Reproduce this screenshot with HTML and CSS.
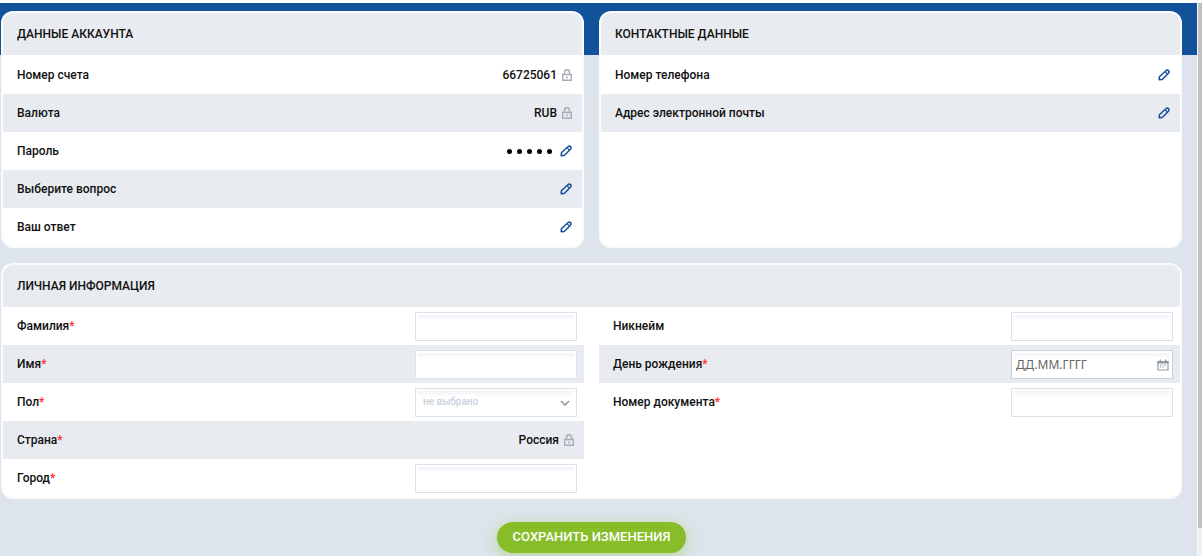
FILE: index.html
```
<!DOCTYPE html>
<html lang="ru">
<head>
<meta charset="utf-8">
<meta name="viewport" content="width=device-width, initial-scale=1">
<title>Личные данные</title>
<link rel="stylesheet" href="styles.css">
</head>
<body>
<svg class="sprite" aria-hidden="true">
  <symbol id="lock" viewBox="0 0 12 12">
    <path d="M3.500 5.500V3.500C3.500 1.800 4.600.8 6 .8s2.500 1 2.500 2.700v2M1.700 5.500h8.600v5.700H1.700z" fill="none" stroke="currentColor" stroke-width="1.400"/>
    <path d="M5.300 7.300h1.400v2.200H5.300z" fill="currentColor"/>
  </symbol>
  <symbol id="pencil" viewBox="0 0 12 12">
    <path d="M1.200 10.800l.2-3L7.600 2C8.700 1 9.700.9 10.500 1.600c.8.8.7 1.800-.3 2.900L4.200 10.500z" fill="none" stroke="currentColor" stroke-width="1.500" stroke-linejoin="round"/>
    <path d="M7.200 2.800l2.200 2.200" fill="none" stroke="currentColor" stroke-width="1.200"/>
    <path d="M.9 11.100l.3-2.700 2.400 2.400z" fill="currentColor"/>
  </symbol>
  <symbol id="calendar" viewBox="0 0 12 12">
    <path d="M1 2.500h10v8.500H1z" fill="none" stroke="currentColor" stroke-width="1.200"/>
    <path d="M.5 2h11v2.500H.5zM2.500.5H4v2H2.500zM8 .5h1.500v2H8zM5.300 5.500h1.200v1H5.300zM7.500 5.500H9v1H7.500zM3 7.500h1.200v1H3zM5.300 7.500h1.200v1H5.300zM3 5.500h1.200v1H3z" fill="currentColor"/>
  </symbol>
  <symbol id="chevron" viewBox="0 0 10 6">
    <path d="M1 1l4 4 4-4" fill="none" stroke="currentColor" stroke-width="1.500"/>
  </symbol>
</svg>
<div class="shell">
  <main class="page">
    <form class="profile">
      <section class="card">
        <h2 class="card-title">Данные аккаунта</h2>
        <div class="rows">
          <div class="row"><span>Номер счета</span><span class="value">66725061<svg class="icon lock"><use href="#lock"/></svg></span></div>
          <div class="row"><span>Валюта</span><span class="value">RUB<svg class="icon lock"><use href="#lock"/></svg></span></div>
          <div class="row"><span>Пароль</span><span class="value"><span class="dots"><i></i><i></i><i></i><i></i><i></i></span><button type="button" class="edit" aria-label="Изменить пароль"><svg class="icon"><use href="#pencil"/></svg></button></span></div>
          <div class="row"><span>Выберите вопрос</span><button type="button" class="edit" aria-label="Изменить вопрос"><svg class="icon"><use href="#pencil"/></svg></button></div>
          <div class="row"><span>Ваш ответ</span><button type="button" class="edit" aria-label="Изменить ответ"><svg class="icon"><use href="#pencil"/></svg></button></div>
        </div>
      </section>
      <section class="card">
        <h2 class="card-title">Контактные данные</h2>
        <div class="rows">
          <div class="row"><span>Номер телефона</span><button type="button" class="edit" aria-label="Изменить телефон"><svg class="icon"><use href="#pencil"/></svg></button></div>
          <div class="row"><span>Адрес электронной почты</span><button type="button" class="edit" aria-label="Изменить почту"><svg class="icon"><use href="#pencil"/></svg></button></div>
        </div>
      </section>
      <section class="card wide">
        <h2 class="card-title">Личная информация</h2>
        <div class="columns">
          <div class="fields">
            <div class="row"><label for="surname">Фамилия<span class="req">*</span></label><input class="control" id="surname" type="text"></div>
            <div class="row"><label for="name">Имя<span class="req">*</span></label><input class="control" id="name" type="text"></div>
            <div class="row"><label for="sex">Пол<span class="req">*</span></label><span class="control-wrap"><select class="control" id="sex"><option>не выбрано</option></select><svg class="chevron"><use href="#chevron"/></svg></span></div>
            <div class="row"><span>Страна<span class="req">*</span></span><span class="value country">Россия<svg class="icon lock"><use href="#lock"/></svg></span></div>
            <div class="row"><label for="city">Город<span class="req">*</span></label><input class="control" id="city" type="text"></div>
          </div>
          <div class="fields">
            <div class="row"><label for="nick">Никнейм</label><input class="control" id="nick" type="text"></div>
            <div class="row"><label for="birth">День рождения<span class="req">*</span></label><span class="control-wrap"><input class="control date" id="birth" type="text" placeholder="ДД.ММ.ГГГГ"><svg class="calendar"><use href="#calendar"/></svg></span></div>
            <div class="row"><label for="doc">Номер документа<span class="req">*</span></label><input class="control" id="doc" type="text"></div>
          </div>
        </div>
      </section>
      <button class="save" type="submit">Сохранить изменения</button>
    </form>
  </main>
  <div class="scrollbar"><div class="thumb"></div></div>
</div>
</body>
</html>
```

FILE: styles.css
```
* { box-sizing: border-box; }
body {
  margin: 0;
  background: #fff;
  color: #111;
  font: 500 12px/16px Roboto, "Liberation Sans", sans-serif;
}
button, input, select { font: inherit; color: inherit; }
.sprite { display: none; }
.shell {
  display: flex;
  height: 100vh;
  padding-top: 3px;
  overflow: hidden;
}
.page {
  flex: 1;
  padding: 8px 15px 3px 1px;
  background: linear-gradient(#11529b 52px, #dde4eb 52px);
}
.profile {
  display: grid;
  grid-template-columns: 1fr 1fr;
  gap: 15px;
}
.card {
  border: 2px solid #fafbfc;
  border-radius: 12px;
  background: #fff;
  overflow: hidden;
}
.wide { grid-column: 1 / -1; }
.card-title {
  margin: 0;
  padding: 13px 14px;
  background: #e8ebf0;
  font-size: 12px;
  font-weight: 500;
  line-height: 16px;
  text-transform: uppercase;
}
.rows { padding-top: 1px; }
.row {
  display: flex;
  align-items: center;
  justify-content: space-between;
  height: 38px;
  padding: 0 10px 0 14px;
}
.row:nth-child(even) { background: #e8ebf0; }
.value {
  display: flex;
  align-items: center;
  gap: 4px;
}
.icon {
  display: block;
  width: 12px;
  height: 12px;
}
.lock { margin-right: -1px; color: #a7adb7; }
.edit {
  padding: 0;
  border: 0;
  background: none;
  color: #17509b;
}
.dots {
  display: flex;
  gap: 5px;
  margin-right: 4px;
}
.dots i {
  width: 5px;
  height: 5px;
  border-radius: 50%;
  background: #000;
}
.columns {
  display: grid;
  grid-template-columns: 1fr 1fr;
  gap: 15px;
}
.fields .row { padding-right: 7px; }
.country { padding-right: 3px; }
.req { color: #ff2b2b; }
.control {
  width: 162px;
  height: 29px;
  padding: 0 7px;
  border: 1px solid #d9e1ea;
  border-radius: 0;
  outline: 0;
  background: linear-gradient(#f1f3f6, #fff 6px) 2px 2px / calc(100% - 4px) 100% no-repeat #fff;
}
.control-wrap { position: relative; display: flex; }
select.control { appearance: none; color: #c8d1dc; font-size: 10px; }
.date { padding: 0 4px; border-color: #c6d1de; font-family: "Noto Sans", "Open Sans", sans-serif; font-weight: 400; }
.date::placeholder { color: #666; opacity: 1; }
.chevron, .calendar { position: absolute; pointer-events: none; }
.chevron { right: 7px; top: 12px; width: 10px; height: 6px; color: #8d98a6; }
.calendar { right: 4px; top: 9px; width: 12px; height: 12px; color: #939aa5; }
.save {
  grid-column: 1 / -1;
  justify-self: center;
  margin-top: 8px;
  padding: 0 16px 2px;
  height: 31px;
  border: 0;
  border-radius: 16px;
  background: #87bd29;
  box-shadow: 0 4px 16px rgba(135, 189, 41, .4);
  color: #fff;
  font-size: 13px;
  font-weight: 500;
  text-transform: uppercase;
}
.scrollbar {
  width: 5px;
  border-left: 1px solid #fafafa;
  background: #f1f1f1;
}
.thumb { height: 95%; background: #c1c1c1; }
```
